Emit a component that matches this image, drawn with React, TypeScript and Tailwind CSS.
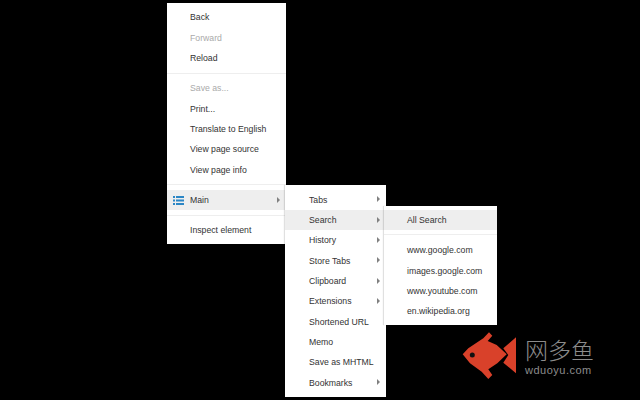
const font = "font-['Liberation_Sans',Arial,sans-serif]";

function Arrow() {
  return <span className="absolute right-[6px] top-[7px] h-0 w-0 border-y-[3px] border-l-[3px] border-y-transparent border-l-[#808080]" />;
}

function Item({ label, off, active, arrow, pad, icon, children }: { label: string; off?: boolean; active?: boolean; arrow?: boolean; pad: string; icon?: React.ReactNode; children?: React.ReactNode }) {
  return (
    <div className={`relative flex h-[20.35px] items-center pt-[1.5px] text-[8.7px] ${pad} ${off ? "text-[#aaa]" : "text-[#333]"} ${active ? "bg-[#eeeeee]" : ""}`}>
      {icon}
      {label}
      {arrow && <Arrow />}
      {children}
    </div>
  );
}

function Sep() {
  return <div className="my-[4.5px] h-px bg-[#eeeeee]" />;
}

function ListIcon() {
  return (
    <svg className="absolute left-[6px] top-[6px]" width="11" height="9" viewBox="0 0 11 9" fill="#2b86c5">
      <rect x="0" y="0" width="2" height="2" />
      <rect x="3" y="0" width="8" height="2" />
      <rect x="0" y="3.5" width="2" height="2" />
      <rect x="3" y="3.5" width="8" height="2" />
      <rect x="0" y="7" width="2" height="2" />
      <rect x="3" y="7" width="8" height="2" />
    </svg>
  );
}

function Logo() {
  return (
    <div className="absolute left-[462px] top-[332px] flex items-start gap-[9px]">
      <svg width="54" height="48" viewBox="0 0 54 48">
        <path fill="#d9412a" d="M0.7 22.3 L6.3 16.3 L21.3 6.3 L27 0.3 L30.3 3.7 L25.7 9 L34.7 13 L44.7 22.3 L35.3 31.3 L26.3 37.3 L30.3 43 L26.3 47 L19.7 39.7 L8 31.3 Z" />
        <circle cx="10.3" cy="23" r="2.5" fill="#111" />
        <path fill="#d9412a" d="M54 5.3 L54 41.3 L41.3 30.7 L46.3 23 L41.3 16.3 Z" />
      </svg>
      <div className="flex flex-col gap-[3px] pt-[6px]">
        <span className="whitespace-nowrap font-['Noto_Sans_CJK_SC',sans-serif] text-[23px] font-light leading-[23px] text-[#8c8c8c]">网多鱼</span>
        <span className="whitespace-nowrap font-['Liberation_Sans',sans-serif] text-[11px] leading-[12px] tracking-[0.5px] text-[#8c8c8c]">wduoyu.com</span>
      </div>
    </div>
  );
}

export default function App() {
  return (
    <div className={`relative h-[400px] w-[640px] overflow-hidden bg-black pl-[167px] pt-[3px] ${font}`}>
      <div className="w-[119px] bg-white py-[4px]">
        <Item pad="pl-[23px]" label="Back" />
        <Item pad="pl-[23px]" label="Forward" off />
        <Item pad="pl-[23px]" label="Reload" />
        <Sep />
        <Item pad="pl-[23px]" label="Save as..." off />
        <Item pad="pl-[23px]" label="Print..." />
        <Item pad="pl-[23px]" label="Translate to English" />
        <Item pad="pl-[23px]" label="View page source" />
        <Item pad="pl-[23px]" label="View page info" />
        <Sep />
        <Item pad="pl-[23px]" label="Main" active arrow icon={<ListIcon />}>
          <div className="absolute left-[118px] top-[-5px] z-10 w-[101px] bg-white py-[4.5px] shadow-[-1px_0_1px_rgba(0,0,0,0.12)]">
            <Item pad="pl-[24px]" label="Tabs" arrow />
            <Item pad="pl-[24px]" label="Search" active arrow>
              <div className="absolute left-[99px] top-[-4px] z-20 w-[113px] bg-white py-[4px] shadow-[-1px_0_1px_rgba(0,0,0,0.12)]">
                <Item pad="pl-[23px]" label="All Search" active />
                <Sep />
                <Item pad="pl-[23px]" label="www.google.com" />
                <Item pad="pl-[23px]" label="images.google.com" />
                <Item pad="pl-[23px]" label="www.youtube.com" />
                <Item pad="pl-[23px]" label="en.wikipedia.org" />
              </div>
            </Item>
            <Item pad="pl-[24px]" label="History" arrow />
            <Item pad="pl-[24px]" label="Store Tabs" arrow />
            <Item pad="pl-[24px]" label="Clipboard" arrow />
            <Item pad="pl-[24px]" label="Extensions" arrow />
            <Item pad="pl-[24px]" label="Shortened URL" />
            <Item pad="pl-[24px]" label="Memo" />
            <Item pad="pl-[24px]" label="Save as MHTML" />
            <Item pad="pl-[24px]" label="Bookmarks" arrow />
          </div>
        </Item>
        <Sep />
        <Item pad="pl-[23px]" label="Inspect element" />
      </div>
      <Logo />
    </div>
  );
}
